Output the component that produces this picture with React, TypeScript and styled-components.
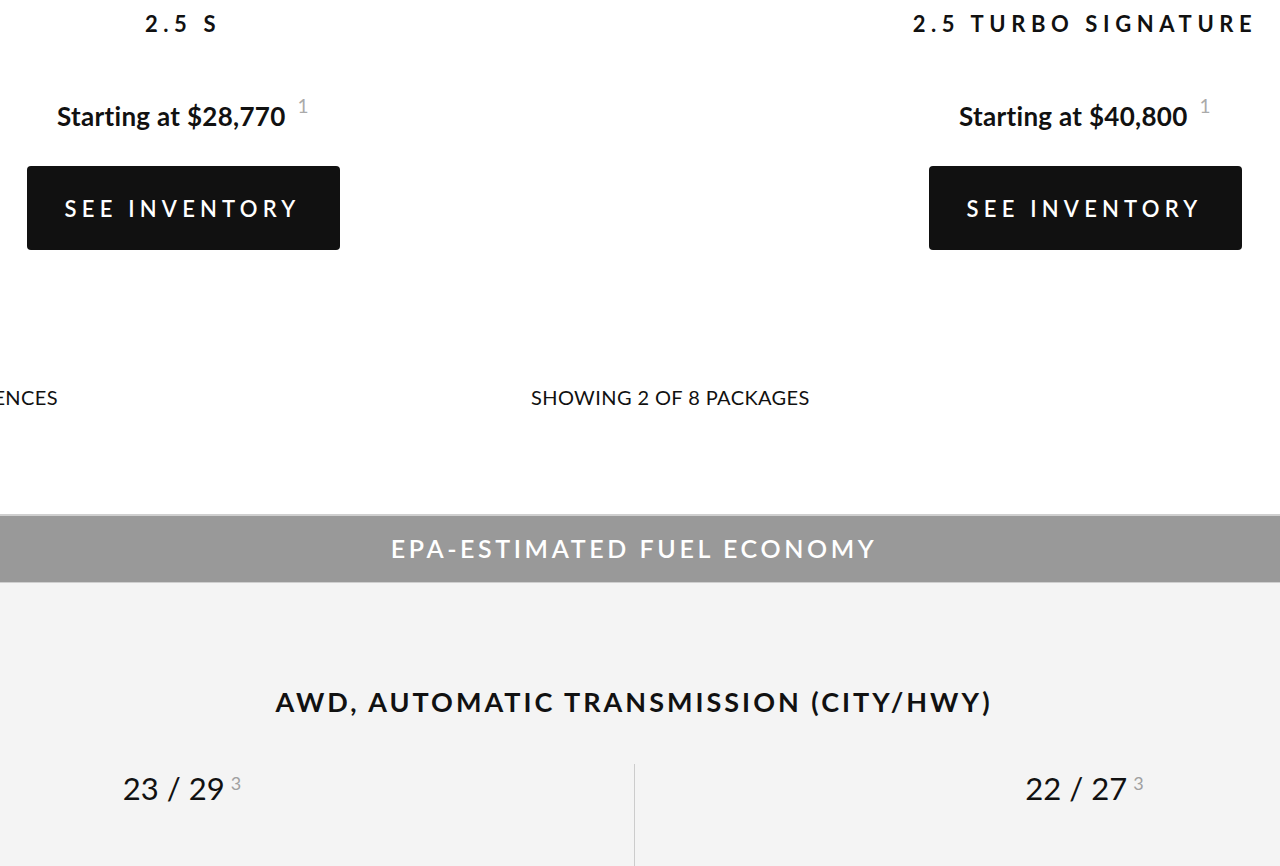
import styled, { createGlobalStyle } from "styled-components";

interface ITrim {
  name: string;
  price: string;
  city: number;
  hwy: number;
}

const trims: ITrim[] = [
  { name: "2.5 S", price: "$28,770", city: 23, hwy: 29 },
  { name: "2.5 Turbo Signature", price: "$40,800", city: 22, hwy: 27 },
];

const GlobalStyle = createGlobalStyle`
  html, body {
    margin: 0;
    padding: 0;
    background: #ffffff;
    overflow: hidden;
  }
  * {
    box-sizing: border-box;
  }
`;

const Page = styled.div`
  width: 1280px;
  height: 866px;
  overflow: hidden;
  font-family: Lato, "Open Sans", sans-serif;
  color: #111111;
`;

const TopSection = styled.section`
  background: #ffffff;
  height: 514px;
  overflow: hidden;
`;

const Track = styled.div`
  display: flex;
  width: 1804px;
  margin-left: -268px;
`;

const TrimColumn = styled.div`
  width: 902px;
  display: flex;
  flex-direction: column;
  align-items: center;
  padding-top: 10px;
`;

const TrimName = styled.h2`
  margin: 0;
  font-size: 22px;
  font-weight: 700;
  letter-spacing: 5.6px;
  text-transform: uppercase;
  line-height: 28px;
  padding-left: 0;
`;

const Price = styled.p`
  margin: 62px 0 0;
  font-size: 26px;
  font-weight: 700;
  letter-spacing: 0.3px;
  line-height: 32px;
`;

const Note = styled.sup`
  font-size: 19px;
  font-weight: 400;
  color: #aaaaaa;
  vertical-align: top;
  position: relative;
  top: -10px;
  margin-left: 12px;
`;

const InventoryButton = styled.button`
  margin-top: 34px;
  width: 313px;
  height: 84px;
  border: none;
  border-radius: 4px;
  background: #111111;
  color: #ffffff;
  font-family: Lato, "Open Sans", sans-serif;
  font-size: 22px;
  font-weight: 600;
  letter-spacing: 5.2px;
  padding-left: 5px;
  cursor: pointer;
`;

const ControlsRow = styled.div`
  display: flex;
  align-items: center;
  margin-top: 135px;
  font-size: 20px;
  letter-spacing: 0.4px;
  text-transform: uppercase;
  color: #111111;
`;

const DiffLabel = styled.span`
  margin-left: -268px;
  width: 326px;
  text-align: right;
  white-space: nowrap;
`;

const Counter = styled.span`
  margin-left: 473px;
  white-space: nowrap;
`;

const Band = styled.div`
  height: 69px;
  background: #999999;
  border-top: 2px solid #cfcfcf;
  border-bottom: 1px solid #cfcfcf;
  display: flex;
  align-items: center;
  justify-content: center;
  padding: 0 12px 3px 0;
  color: #ffffff;
  font-size: 25px;
  font-weight: 600;
  letter-spacing: 3.6px;
  text-transform: uppercase;
`;

const FuelSection = styled.section`
  background: #f4f4f4;
  height: 300px;
  overflow: hidden;
`;

const FuelHeading = styled.h3`
  margin: 0;
  padding-top: 101px;
  text-align: center;
  font-size: 27px;
  font-weight: 700;
  letter-spacing: 3px;
  line-height: 36px;
  text-transform: uppercase;
  padding-right: 12px;
`;

const FuelColumn = styled.div<{ divided?: boolean }>`
  width: 902px;
  height: 200px;
  margin-top: 44px;
  display: flex;
  justify-content: center;
  padding-top: 6px;
  border-left: ${(props) => (props.divided ? "1px solid #cccccc" : "none")};
`;

const Mpg = styled.div`
  font-size: 31px;
  font-weight: 400;
  line-height: 36px;
  color: #111111;
  padding-right: 2px;
`;

const MpgNote = styled.sup`
  font-size: 18px;
  font-weight: 400;
  color: #a0a0a0;
  vertical-align: top;
  position: relative;
  top: -5px;
  margin-left: 6px;
`;

function App() {
  return (
    <Page>
      <GlobalStyle />
      <TopSection>
        <Track>
          {trims.map((trim) => (
            <TrimColumn key={trim.name}>
              <TrimName>{trim.name}</TrimName>
              <Price>
                Starting at {trim.price}
                <Note>1</Note>
              </Price>
              <InventoryButton>SEE INVENTORY</InventoryButton>
            </TrimColumn>
          ))}
        </Track>
        <ControlsRow>
          <DiffLabel>Show Differences</DiffLabel>
          <Counter>Showing 2 of 8 packages</Counter>
        </ControlsRow>
      </TopSection>
      <Band>EPA-Estimated Fuel Economy</Band>
      <FuelSection>
        <FuelHeading>AWD, Automatic Transmission (City/HWY)</FuelHeading>
        <Track>
          {trims.map((trim, i) => (
            <FuelColumn key={trim.name} divided={i > 0}>
              <Mpg>
                {trim.city} / {trim.hwy}
                <MpgNote>3</MpgNote>
              </Mpg>
            </FuelColumn>
          ))}
        </Track>
      </FuelSection>
    </Page>
  );
}

export default App;
